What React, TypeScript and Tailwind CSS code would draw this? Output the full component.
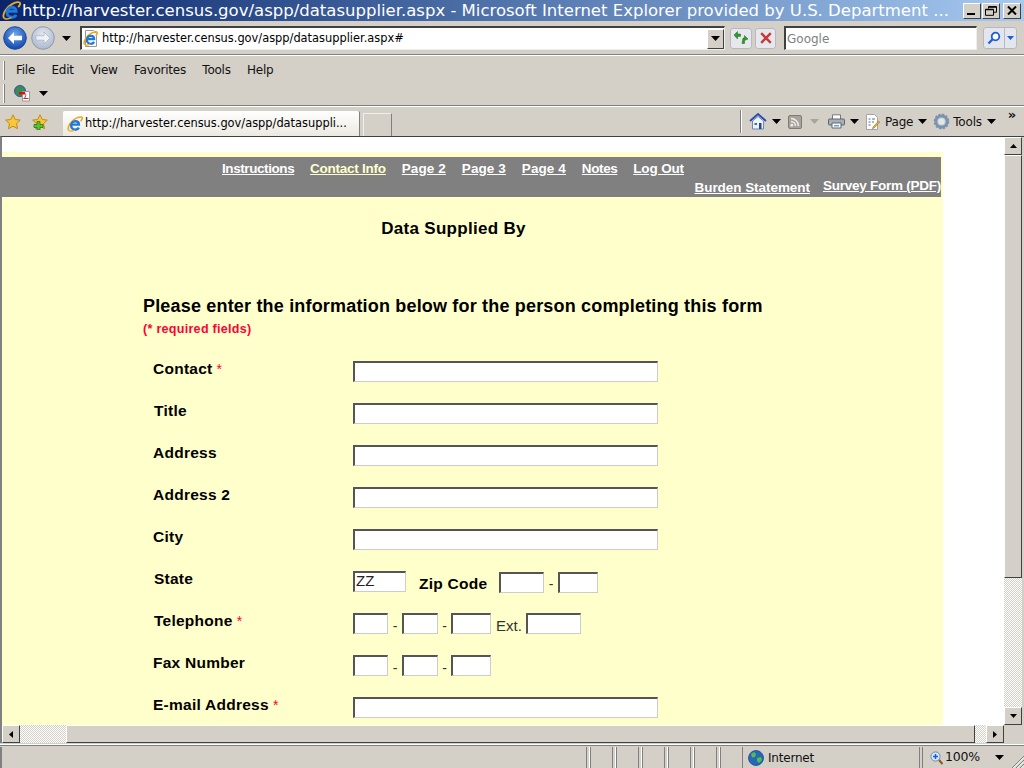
import React from "react";

const ui = "font-['DejaVu_Sans',sans-serif]";
const ar = "font-['Liberation_Sans',Arial,sans-serif]";

function IELogo({ size = 16 }: { size?: number }) {
  return (
    <svg width={size} height={size} viewBox="0 0 20 20" className="shrink-0">
      <path d="M2.2 18C-.5 14.5 5 6 11 3c4-2 7.500-2.500 8-.8.4 1.400-.8 3-2 4.300" fill="none" stroke="#eda91f" strokeWidth="2" />
      <path d="M5.300 10.800h9.600c0-2.500-2-4.200-4.500-4.200-3 0-5.200 2.300-5.200 5.300s2.200 5.200 5.200 5.200c2 0 3.600-1 4.400-2.600" fill="none" stroke="#1f78dc" strokeWidth="3" />
      <path d="M2.200 18c1.800 1.600 5.300.6 7.800-.6" fill="none" stroke="#eda91f" strokeWidth="1.500" />
    </svg>
  );
}

function Caret({ color = "#000" }: { color?: string }) {
  return (
    <svg width="9" height="5" viewBox="0 0 9 5" className="shrink-0">
      <path d="M0 0h9L4.500 5z" fill={color} />
    </svg>
  );
}

function NavArrow({ dir, active }: { dir: "l" | "r"; active: boolean }) {
  const id = active ? "ba" : "fa";
  return (
    <svg width="24" height="24" viewBox="0 0 24 24" className="shrink-0">
      <defs>
        <radialGradient id={id} cx="50%" cy="35%" r="70%">
          <stop offset="0" stopColor={active ? "#6fa8ec" : "#e4e8f0"} />
          <stop offset="1" stopColor={active ? "#0a3ea8" : "#a8b4cc"} />
        </radialGradient>
      </defs>
      <circle cx="12" cy="12" r="11.300" fill={`url(#${id})`} stroke={active ? "#1c4f9c" : "#8e9ab0"} />
      <path d={dir === "l" ? "M5 12l6-6v3.800h8v4.400h-8V18z" : "M19 12l-6-6v3.800H5v4.400h8V18z"} fill={active ? "#fff" : "#f0f2f6"} stroke={active ? "none" : "#9aa6bc"} strokeWidth=".6" />
    </svg>
  );
}

function WinBtn({ children }: { children: React.ReactNode }) {
  return (
    <div className="w-[18px] h-[16px] flex items-center justify-center bg-[#d4d0c8] border border-t-white border-l-white border-r-[#404040] border-b-[#404040]">
      {children}
    </div>
  );
}

function Grip() {
  return <div className="w-[2px] h-[19px] bg-[#808080] border-l border-white ml-[3px] shrink-0" />;
}

function Star({ plus }: { plus?: boolean }) {
  return (
    <svg width="16" height="16" viewBox="0 0 16 16" className="shrink-0">
      <path d="M8 .8l2.200 4.700 5.100.6-3.800 3.500 1 5.100L8 12.200l-4.500 2.500 1-5.100L.7 6.100l5.100-.6z" fill="#f8c838" stroke="#c88a10" />
      {plus && <path d="M2 10.500h3v-3h3v3h3v3H8v2.500H5v-2.500H2z" fill="#5cc030" stroke="#2a7a14" strokeWidth=".8" />}
    </svg>
  );
}

function ScrollBtn({ dir }: { dir: "u" | "d" | "l" | "r" }) {
  const p = { u: "M0 4h7L3.500 0z", d: "M0 0h7L3.500 4z", l: "M4 0v7L0 3.500z", r: "M0 0v7l4-3.500z" }[dir];
  const horizontal = dir === "l" || dir === "r";
  return (
    <div className="w-[18px] h-[18px] shrink-0 flex items-center justify-center bg-[#d4d0c8] border border-t-white border-l-white border-r-[#404040] border-b-[#404040]">
      <svg width={horizontal ? 4 : 7} height={horizontal ? 7 : 4} viewBox={horizontal ? "0 0 4 7" : "0 0 7 4"}>
        <path d={p} fill="#000" />
      </svg>
    </div>
  );
}

const checker = "bg-[repeating-conic-gradient(#d4d0c8_0_25%,#ffffff_0_50%)] bg-[length:2px_2px]";
const inputCls = "block shrink-0 h-[21px] bg-white border border-t-2 border-l-2 border-t-[#555] border-l-[#555] border-r-[#ccc] border-b-[#ccc]";
const labelCls = `${ar} text-[15.5px] leading-4 font-bold text-black tracking-[0.25px] whitespace-nowrap`;
const sep = `${ar} text-[14px] text-[#333] leading-4 mt-[5px]`;

function Field({ w, children }: { w: string; children?: React.ReactNode }) {
  return <div className={`${inputCls} ${w} ${ar} text-[15px] leading-[15px] text-[#222] pl-px`}>{children}</div>;
}

function Phone() {
  return (
    <>
      <Field w="w-[35px]" />
      <span className={`${sep} w-[14px] text-center`}>-</span>
      <Field w="w-[36px]" />
      <span className={`${sep} w-[13px] text-center`}>-</span>
      <Field w="w-[40px]" />
    </>
  );
}

function Row({ label, req, pad, children }: { label: string; req?: boolean; pad: string; children: React.ReactNode }) {
  return (
    <div className="flex h-[42px]">
      <div className={`${labelCls} w-[210px] ${pad}`}>
        {label}
        {req && <span className="text-[#ff0033] font-normal text-[14px]"> *</span>}
      </div>
      <div className="flex items-start">{children}</div>
    </div>
  );
}

export default function App() {
  const navCls = `${ar} text-[13.5px] leading-4 font-bold underline whitespace-nowrap`;
  return (
    <div className={`w-[1024px] h-[768px] overflow-hidden flex flex-col bg-[#d4d0c8] ${ui}`}>
      {/* Title bar */}
      <div className="h-[21px] shrink-0 flex items-center pl-[2px] pr-[3px] bg-gradient-to-r from-[#0a246a] to-[#a6caf0]">
        <IELogo size={19} />
        <div className="ml-[1px] text-[16.5px] leading-[21px] text-white whitespace-nowrap">
          http://harvester.census.gov/aspp/datasupplier.aspx - Microsoft Internet Explorer provided by U.S. Department ...
        </div>
        <div className="ml-auto flex items-center gap-[1px]">
          <WinBtn><div className="w-[8px] h-[2px] bg-black mt-[7px] mr-[3px]" /></WinBtn>
          <WinBtn>
            <svg width="12" height="10" viewBox="0 0 12 10"><path d="M3.500 2.500V.7h8v5.500H9M.5 3.500h8v5.800h-8z" fill="none" stroke="#000" /><path d="M.5 3.500h8M3.500 1h8" stroke="#000" strokeWidth="1.600" /></svg>
          </WinBtn>
          <div className="w-[1px]" />
          <WinBtn>
            <svg width="10" height="9" viewBox="0 0 10 9"><path d="M1 .5l8 8M9 .5l-8 8" stroke="#000" strokeWidth="2" /></svg>
          </WinBtn>
        </div>
      </div>

      {/* Address row */}
      <div className="h-[35px] shrink-0 flex items-center pl-[3px] border-b border-b-white shadow-[inset_0_-1px_0_#808080]">
        <NavArrow dir="l" active />
        <div className="w-[4px]" />
        <NavArrow dir="r" active={false} />
        <div className="ml-[7px]"><Caret /></div>
        <div className="ml-[9px] w-[645px] h-[24px] flex items-center bg-white border border-t-2 border-l-2 border-t-[#404040] border-l-[#404040] border-r-[#eee] border-b-[#eee]">
          <svg width="16" height="17" viewBox="0 0 16 17" className="ml-[1px] shrink-0">
            <path d="M2.500.5h8l3 3v13h-11z" fill="#fff" stroke="#999" />
          </svg>
          <div className="-ml-[16px] mr-[4px]"><IELogo size={15} /></div>
          <span className="text-[11.4px] text-black whitespace-nowrap">http://harvester.census.gov/aspp/datasupplier.aspx#</span>
          <div className="ml-auto w-[17px] h-[20px] flex items-center justify-center bg-[#d4d0c8] border border-t-white border-l-white border-r-[#404040] border-b-[#404040]">
            <Caret />
          </div>
        </div>
        <div className="ml-[5px] w-[22px] h-[21px] rounded-[3px] border border-[#b8b8c0] bg-[#e6e8ee] flex items-center justify-center">
          <svg width="16" height="14" viewBox="0 0 16 14">
            <path d="M1 4l3.500-3.500V3h3v2.400h-3V8zM15 8l-3.500-3.500V7h-1.500l-1 5.500h2.500V9.500L15 8z" fill="#2f9a28" stroke="#1a6a14" strokeWidth=".5" />
          </svg>
        </div>
        <div className="ml-[3px] w-[21px] h-[21px] rounded-[3px] border border-[#b8b8c0] bg-[#e6e8ee] flex items-center justify-center">
          <svg width="12" height="12" viewBox="0 0 12 12"><path d="M1.200 1.200l9.600 9.600M10.800 1.200l-9.600 9.600" stroke="#c83838" strokeWidth="2.400" /></svg>
        </div>
        <div className="ml-[8px] w-[193px] h-[24px] flex items-center bg-white border border-t-2 border-l-2 border-t-[#404040] border-l-[#404040] border-r-[#eee] border-b-[#eee] pl-[1px] text-[12px] text-[#808080]">
          Google
        </div>
        <div className="ml-[6px] w-[34px] h-[22px] flex rounded-[3px] border border-[#b8b8c0] bg-[#e4e6ee]">
          <div className="w-[21px] flex items-center justify-center border-r border-[#b8b8c0]">
            <svg width="14" height="14" viewBox="0 0 14 14"><circle cx="8.500" cy="5.500" r="3.800" fill="#fff" stroke="#1a5ce0" strokeWidth="1.800" /><path d="M5.600 8.200L1.500 12.500" stroke="#1a5ce0" strokeWidth="2.200" /></svg>
          </div>
          <div className="flex-1 flex items-center justify-center"><svg width="7" height="4" viewBox="0 0 7 4"><path d="M0 0h7L3.500 4z" fill="#1a5ce0" /></svg></div>
        </div>
      </div>

      {/* Menu + command rows */}
      <div className="h-[50px] shrink-0 flex flex-col border-b border-b-[#808080] pt-[3px]">
        <div className="h-[22px] flex items-center">
          <Grip />
          <div className="flex text-[12px] leading-[20px] text-[#111] ml-[11px] gap-[16.4px] tracking-[-0.25px]">
            <span>File</span><span>Edit</span><span>View</span><span>Favorites</span><span>Tools</span><span>Help</span>
          </div>
        </div>
        <div className="h-[22px] mt-[1px] flex items-center">
          <Grip />
          <svg width="18" height="18" viewBox="0 0 18 18" className="ml-[8px]">
            <circle cx="7" cy="7" r="5.500" fill="#3a8a5a" stroke="#2a5a9a" />
            <path d="M9.500 7.500h7v9.500h-7z" fill="#fff" stroke="#999" />
            <path d="M6 8h6v2.500H6z" fill="#e01010" />
            <path d="M11 15c2-3 2-4 1.500-5.500M10.500 14.500h5" stroke="#c03030" fill="none" />
          </svg>
          <div className="ml-[8px]"><Caret /></div>
        </div>
      </div>

      {/* Tabs row */}
      <div className="h-[30px] shrink-0 flex items-end border-t border-t-white">
        <div className="h-[29px] flex items-center pl-[5px]">
          <Star />
          <div className="ml-[11px]"><Star plus /></div>
        </div>
        <div className="ml-[15px] w-[297px] h-[25px] flex items-center pl-[4px] bg-gradient-to-b from-white to-[#ece9e0] border-r border-r-[#808080] rounded-t-[2px]">
          <IELogo size={16} />
          <span className="ml-[2px] text-[11.4px] text-black whitespace-nowrap">http://harvester.census.gov/aspp/datasuppli...</span>
        </div>
        <div className="ml-[3px] w-[29px] h-[23px] border border-t-[#f0eee8] border-l-[#f0eee8] border-r-[#808080] border-b-0" />
        <div className="ml-[348px] h-[29px] flex items-center text-[12px] text-[#111] tracking-[-0.2px] whitespace-nowrap">
          <div className="w-[2px] h-[23px] bg-[#808080] border-r border-white mr-[7px]" />
          <svg width="18" height="17" viewBox="0 0 18 17">
            <path d="M1 8l8-7 8 7" fill="none" stroke="#2a4ab0" strokeWidth="1.800" />
            <path d="M3.500 8v8h11V8L9 3.500z" fill="#eef2fa" stroke="#7088b0" />
            <path d="M5.500 10h2.500v2H5.500z" fill="#3a6ab8" /><path d="M10 10h2.500v6H10z" fill="#234a90" />
          </svg>
          <div className="ml-[5px]"><Caret /></div>
          <svg width="14" height="14" viewBox="0 0 14 14" className="ml-[7px]">
            <rect x=".5" y=".5" width="13" height="13" rx="1.500" fill="#a8a49c" stroke="#807c74" />
            <circle cx="3.800" cy="10.200" r="1.400" fill="#eee" />
            <path d="M3 6.500a4.500 4.500 0 0 1 4.500 4.500M3 3.500a7.500 7.500 0 0 1 7.500 7.500" fill="none" stroke="#eee" strokeWidth="1.400" />
          </svg>
          <div className="ml-[8px]"><Caret color="#a8a49c" /></div>
          <svg width="17" height="15" viewBox="0 0 17 15" className="ml-[9px]">
            <path d="M4.500 5V.8h8V5" fill="#fff" stroke="#777" />
            <rect x=".5" y="5" width="16" height="6" rx="1" fill="#a8aeb8" stroke="#60666e" />
            <path d="M4 9h9v5H4z" fill="#fff" stroke="#666" />
            <path d="M6 11h5v1.500H6z" fill="#4ab0d8" />
          </svg>
          <div className="ml-[5px]"><Caret /></div>
          <svg width="15" height="16" viewBox="0 0 15 16" className="ml-[6px]">
            <path d="M1.500.5h8l3 3v12h-11z" fill="#fdfdfa" stroke="#a0a4b0" />
            <path d="M3.500 5h2M7 5h3M3.500 8h2M7 8h2M3.500 11h2" stroke="#5070a8" />
            <path d="M8 13l5.500-6 1.200 1-5.500 6-1.800.7z" fill="#e8b030" stroke="#906010" strokeWidth=".5" />
          </svg>
          <span className="ml-[5px]">Page</span>
          <div className="ml-[5px]"><Caret /></div>
          <svg width="17" height="17" viewBox="0 0 17 17" className="ml-[6px]">
            <circle cx="8.500" cy="8.500" r="5.600" fill="none" stroke="#7a94b0" strokeWidth="3" />
            <circle cx="8.500" cy="8.500" r="7" fill="none" stroke="#7a94b0" strokeWidth="1.800" strokeDasharray="2.200 1.500" />
            <circle cx="8.500" cy="8.500" r="3" fill="#dfe6ee" />
          </svg>
          <span className="ml-[3px]">Tools</span>
          <div className="ml-[5px]"><Caret /></div>
          <span className="ml-[12px] mb-[14px] text-[13px] font-bold leading-none">»</span>
        </div>
      </div>

      {/* Main viewport */}
      <div className="flex-1 min-h-0 border-t border-t-[#404040] border-l-2 border-l-[#808080] grid grid-cols-[1fr_18px] grid-rows-[1fr_18px] pr-[2px]">
        <div className="bg-white overflow-hidden pt-[15px]">
          <div className="w-[941px] h-[600px] bg-[#ffffcc] pt-[5px]">
            <div className="w-[939px] h-[40px] bg-[#808080] flex flex-col pt-[4px]">
              <div className="flex pl-[220px] gap-[15.9px] text-white">
                <a className={`${navCls} tracking-[-0.42px]`}>Instructions</a>
                <a className={`${navCls} tracking-[-0.25px] text-[#ffffcc]`}>Contact Info</a>
                <a className={`${navCls} tracking-[0.1px]`}>Page 2</a>
                <a className={`${navCls} tracking-[0.1px]`}>Page 3</a>
                <a className={`${navCls} tracking-[0.1px]`}>Page 4</a>
                <a className={`${navCls} tracking-[-0.4px]`}>Notes</a>
                <a className={`${navCls} tracking-[-0.15px]`}>Log Out</a>
              </div>
              <div className="flex justify-end items-start gap-[13px] text-white mt-[1px]">
                <a className={`${navCls} mt-[2px] tracking-[-0.05px]`}>Burden Statement</a>
                <a className={`${navCls} tracking-[-0.25px]`}>Survey Form (PDF)</a>
              </div>
            </div>
            <div className={`${ar} mt-[22px] text-center pr-[38px] text-[17px] leading-5 font-bold tracking-[0.3px] text-black`}>
              Data Supplied By
            </div>
            <div className={`${ar} mt-[57px] ml-[141px] text-[18px] leading-5 font-bold tracking-[0.18px] text-black whitespace-nowrap`}>
              Please enter the information below for the person completing this form
            </div>
            <div className={`${ar} mt-[5px] ml-[141px] text-[12.5px] leading-4 font-bold tracking-[0.3px] text-[#ff0033]`}>
              (* required fields)
            </div>
            <div className="mt-[24px] ml-[141px]">
              <Row label="Contact" req pad="pl-[10px]"><Field w="w-[305px]" /></Row>
              <Row label="Title" pad="pl-[11px]"><Field w="w-[305px]" /></Row>
              <Row label="Address" pad="pl-[10px]"><Field w="w-[305px]" /></Row>
              <Row label="Address 2" pad="pl-[10px]"><Field w="w-[305px]" /></Row>
              <Row label="City" pad="pl-[10px]"><Field w="w-[305px]" /></Row>
              <Row label="State" pad="pl-[11px]">
                <Field w="w-[53px]">ZZ</Field>
                <span className={`${labelCls} ml-[13px] mt-[5px] w-[80px]`}>Zip Code</span>
                <div className="mt-[1px]"><Field w="w-[45px]" /></div>
                <span className={`${sep} w-[14px] text-center`}>-</span>
                <div className="mt-[1px]"><Field w="w-[40px]" /></div>
              </Row>
              <Row label="Telephone" req pad="pl-[11px]">
                <Phone />
                <span className={`${ar} text-[15px] text-[#333] leading-4 mt-[5px] ml-[5px] w-[30px]`}>Ext.</span>
                <Field w="w-[55px]" />
              </Row>
              <Row label="Fax Number" pad="pl-[10px]"><Phone /></Row>
              <Row label="E-mail Address" req pad="pl-[10px]"><Field w="w-[305px]" /></Row>
            </div>
          </div>
        </div>

        {/* Vertical scrollbar */}
        <div className="flex flex-col min-h-0">
          <ScrollBtn dir="u" />
          <div className="h-[423px] bg-[#d4d0c8] border border-t-white border-l-white border-r-[#404040] border-b-[#404040]" />
          <div className={`flex-1 ${checker}`} />
          <ScrollBtn dir="d" />
        </div>

        {/* Horizontal scrollbar */}
        <div className="flex">
          <ScrollBtn dir="l" />
          <div className={`w-[46px] ${checker}`} />
          <div className="flex-1 bg-[#d4d0c8] border border-t-white border-l-white border-r-[#404040] border-b-[#404040]" />
          <div className={`w-[11px] ${checker}`} />
          <ScrollBtn dir="r" />
        </div>
        <div className="bg-[#d4d0c8]" />
      </div>

      {/* Status bar */}
      <div className="h-[24px] shrink-0 mt-px border-t border-t-white shadow-[inset_0_1px_0_#808080] flex items-stretch pt-[2px] text-[12px] text-[#111]">
        <div className="w-[587px] border-l-2 border-l-[#808080] border-r border-r-[#808080]" />
        {[0, 1, 2, 3, 4, 5].map((i) => (
          <div key={i} className="ml-[2px] w-[24px] border-l border-l-white border-r border-r-[#808080] shadow-[inset_1px_0_0_#808080]" />
        ))}
        <div className="ml-[2px] w-[175px] flex items-center pl-[3px] border-r border-r-[#808080]">
          <svg width="16" height="16" viewBox="0 0 16 16">
            <circle cx="8" cy="8" r="7.500" fill="#2a66b8" stroke="#1e4a90" strokeWidth=".8" />
            <path d="M3 4l3-2 2 2-1 3-3 .5zM9 8l4-1 1 3-3 3-2-2z" fill="#4ac050" />
          </svg>
          <span className="ml-[4px] tracking-[-0.2px]">Internet</span>
        </div>
        <div className="ml-[2px] flex-1 flex items-center pl-[7px] border-l border-l-[#808080] tracking-[-0.2px]">
          <svg width="13" height="14" viewBox="0 0 13 14">
            <circle cx="5.500" cy="5.500" r="4.600" fill="#d8e8fa" stroke="#6a8ab0" />
            <path d="M3 5.500h5M5.500 3v5" stroke="#1a5ce0" strokeWidth="1.500" />
            <path d="M9 9l3.500 4" stroke="#905020" strokeWidth="2" />
          </svg>
          <span className="ml-[2px] text-[12.5px]">100%</span>
          <div className="ml-[15px]"><Caret /></div>
          <svg width="13" height="13" viewBox="0 0 13 13" className="ml-auto self-end">
            <path d="M13 1L1 13M13 5L5 13M13 9L9 13" stroke="#808080" />
            <path d="M13 2.500L2.500 13M13 6.500L6.500 13M13 10.500L10.500 13" stroke="#fff" />
          </svg>
        </div>
      </div>
    </div>
  );
}
